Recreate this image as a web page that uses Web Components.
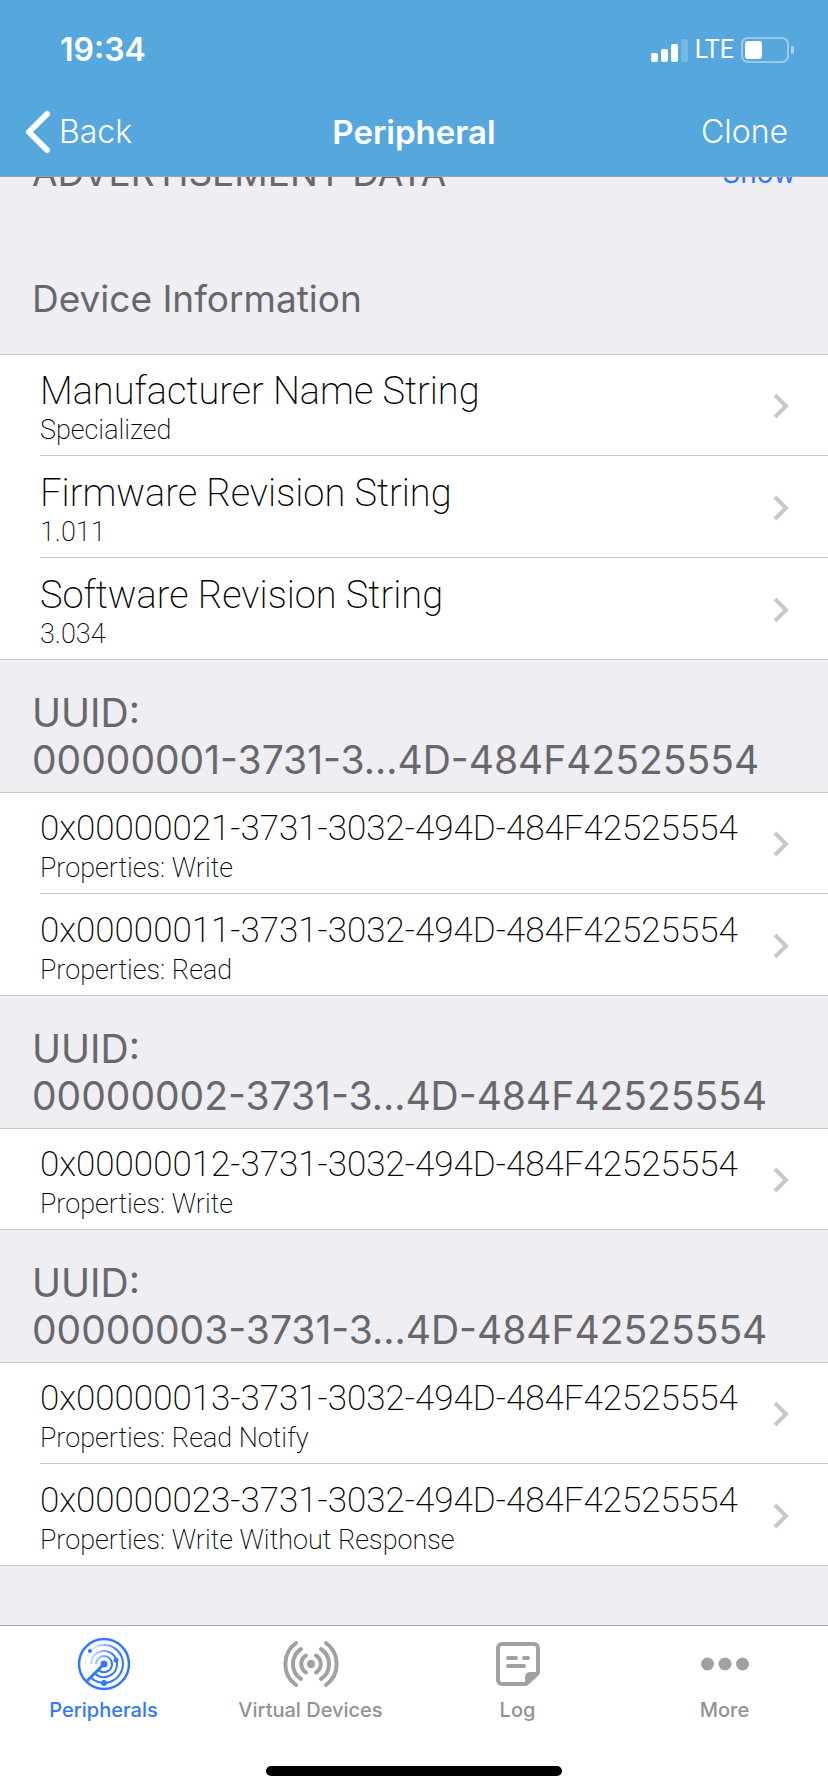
<!DOCTYPE html>
<html lang="en">
<head>
<meta charset="utf-8">
<meta name="viewport" content="width=device-width, initial-scale=1">
<title>Peripheral</title>
<style>
  html, body { margin: 0; background: #efeef3; }
  body { font-family: Inter, "Liberation Sans", sans-serif; }
</style>
</head>
<body>
<ble-app>
  <nav-bar slot="top" heading="Peripheral" back="Back" action="Clone">
    <status-bar time="19:34" network="LTE"></status-bar>
  </nav-bar>

  <advert-row>ADVERTISEMENT DATA</advert-row>

  <service-group kind="named">
    <span slot="title">Device Information</span>
    <characteristic-row kind="named">Manufacturer Name String<span slot="detail">Specialized</span></characteristic-row>
    <characteristic-row kind="named">Firmware Revision String<span slot="detail">1.011</span></characteristic-row>
    <characteristic-row kind="named">Software Revision String<span slot="detail">3.034</span></characteristic-row>
  </service-group>

  <service-group>
    <span slot="title">UUID:<br>00000001-3731-3…4D-484F42525554</span>
    <characteristic-row>0x00000021-3731-3032-494D-484F42525554<span slot="detail">Properties: Write</span></characteristic-row>
    <characteristic-row>0x00000011-3731-3032-494D-484F42525554<span slot="detail">Properties: Read</span></characteristic-row>
  </service-group>

  <service-group>
    <span slot="title">UUID:<br>00000002-3731-3…4D-484F42525554</span>
    <characteristic-row>0x00000012-3731-3032-494D-484F42525554<span slot="detail">Properties: Write</span></characteristic-row>
  </service-group>

  <service-group>
    <span slot="title">UUID:<br>00000003-3731-3…4D-484F42525554</span>
    <characteristic-row>0x00000013-3731-3032-494D-484F42525554<span slot="detail">Properties: Read Notify</span></characteristic-row>
    <characteristic-row>0x00000023-3731-3032-494D-484F42525554<span slot="detail">Properties: Write Without Response</span></characteristic-row>
  </service-group>

  <tab-bar slot="bottom">
    <tab-item active>Peripherals
      <svg slot="icon" width="56" height="56" viewBox="0 0 56 56" fill="none" stroke="currentColor" stroke-width="2" aria-hidden="true">
        <defs>
          <linearGradient id="sweep" gradientUnits="userSpaceOnUse" x1="8" y1="24" x2="32" y2="34">
            <stop offset="0" stop-color="#3478f6" stop-opacity="0.05"/>
            <stop offset="1" stop-color="#3478f6"/>
          </linearGradient>
        </defs>
        <circle cx="28" cy="28" r="25" stroke-width="2.500"/>
        <g stroke="url(#sweep)">
          <path d="M9 28A19 19 0 0 1 47 28"/>
          <path d="M15 28A13 13 0 0 1 41 28"/>
          <path d="M20 28A8 8 0 0 1 36 28"/>
        </g>
        <path d="M47 28A19 19 0 0 1 14.600 41.400M41 28A13 13 0 0 1 18.800 37.200M36 28A8 8 0 0 1 22.300 33.700"/>
        <path d="M28 28L11 45" stroke-width="3"/>
        <g fill="currentColor" stroke="none">
          <circle cx="28" cy="28" r="3.500"/><circle cx="40" cy="24" r="2.500"/><circle cx="14" cy="15" r="2"/><circle cx="28" cy="47" r="3"/>
        </g>
      </svg>
    </tab-item>
    <tab-item>Virtual Devices
      <svg slot="icon" width="56" height="56" viewBox="0 0 56 56" fill="none" stroke="currentColor" stroke-width="4" stroke-linecap="round" aria-hidden="true">
        <circle cx="28" cy="28" r="4" fill="currentColor" stroke="none"/>
        <path d="M23 19.500A10 10 0 0 0 23 36.500M33 19.500A10 10 0 0 1 33 36.500M18 13A18 18 0 0 0 18 43M38 13A18 18 0 0 1 38 43M13 7A26 26 0 0 0 13 49M43 7A26 26 0 0 1 43 49"/>
      </svg>
    </tab-item>
    <tab-item>Log
      <svg slot="icon" width="56" height="56" viewBox="0 0 56 56" fill="none" stroke="currentColor" stroke-width="4" stroke-linecap="round" stroke-linejoin="round" aria-hidden="true">
        <path d="M36 48H12a4 4 0 0 1-4-4V12a4 4 0 0 1 4-4h32a4 4 0 0 1 4 4v25z"/>
        <path d="M37 47V41a3 3 0 0 1 3-3h7z" fill="currentColor"/>
        <path d="M18 22h8M34 22h4M18 30h16"/>
      </svg>
    </tab-item>
    <tab-item>More
      <svg slot="icon" width="56" height="56" viewBox="0 0 56 56" fill="currentColor" aria-hidden="true">
        <circle cx="10.500" cy="28" r="6.500"/><circle cx="28" cy="28" r="6.500"/><circle cx="45.500" cy="28" r="6.500"/>
      </svg>
    </tab-item>
  </tab-bar>
</ble-app>

<script>
const define = (name, html, setup) => customElements.define(name, class extends HTMLElement {
  constructor() {
    super();
    this.attachShadow({ mode: 'open' }).innerHTML = html;
  }
  connectedCallback() { if (setup) setup(this, this.shadowRoot); }
});

define('ble-app', `
  <style>
    :host { display: flex; flex-direction: column; min-height: 100vh; }
    main { flex: 1; overflow: hidden; }
  </style>
  <slot name="top"></slot>
  <main><slot></slot></main>
  <slot name="bottom"></slot>`);

define('status-bar', `
  <style>
    :host { display: flex; justify-content: space-between; align-items: center; height: 100px; padding: 0 34px 0 60px; }
    time { font-size: 32px; font-weight: 600; line-height: 40px; }
    .right { display: flex; align-items: center; gap: 7px; }
    .network { font: 400 25px/40px Roboto, sans-serif; }
    svg { display: block; }
  </style>
  <time></time>
  <div class="right">
    <svg width="37" height="24" viewBox="0 0 37 24" fill="#fff" aria-hidden="true">
      <rect y="15" width="7" height="9" rx="2"/><rect x="10" y="11" width="7" height="13" rx="2"/>
      <rect x="20" y="6" width="7" height="18" rx="2"/><rect x="30" y="1" width="7" height="23" rx="2" opacity=".2"/>
    </svg>
    <span class="network"></span>
    <svg width="53" height="26" viewBox="0 0 53 26" aria-hidden="true">
      <rect x="1" y="1" width="46" height="24" rx="6" fill="none" stroke="#fff" stroke-opacity=".4" stroke-width="2"/>
      <rect x="4" y="4" width="17" height="18" rx="3" fill="#fff"/>
      <path d="M50 9a4 4 0 0 1 0 8z" fill="#fff" opacity=".5"/>
    </svg>
  </div>`, (el, root) => {
  root.querySelector('time').textContent = el.getAttribute('time');
  root.querySelector('.network').textContent = el.getAttribute('network');
});

define('nav-bar', `
  <style>
    :host { display: block; position: relative; z-index: 1; background: #55a7de; color: #fff; border-bottom: 1px solid #a0a0a5; }
    .row { display: grid; grid-template-columns: 1fr auto 1fr; align-items: center; height: 76px; padding: 0 24px 12px; box-sizing: border-box; }
    button { all: unset; display: flex; align-items: center; gap: 7px; font-size: 32px; font-weight: 350; line-height: 40px; cursor: pointer; }
    .title { margin: 0; font-size: 33px; font-weight: 600; line-height: 40px; }
    .action { justify-self: end; margin-right: 16px; }
    svg { display: block; }
  </style>
  <slot></slot>
  <div class="row">
    <button type="button" class="back">
      <svg width="28" height="44" viewBox="0 0 28 44" fill="none" stroke="#fff" stroke-width="6" stroke-linecap="round" stroke-linejoin="round" aria-hidden="true"><path d="M23 4L5 22l18 18"/></svg>
      <span></span>
    </button>
    <h1 class="title"></h1>
    <button type="button" class="action"></button>
  </div>`, (el, root) => {
  root.querySelector('.back span').textContent = el.getAttribute('back');
  root.querySelector('.title').textContent = el.getAttribute('heading');
  root.querySelector('.action').textContent = el.getAttribute('action');
});

define('advert-row', `
  <style>
    :host { display: flex; justify-content: space-between; align-items: center; margin-top: -26px; padding: 0 32px; color: #67676c; font-size: 37px; line-height: 44px; }
    button { all: unset; color: #3478f6; font-size: 28px; line-height: 44px; cursor: pointer; }
  </style>
  <span><slot></slot></span>
  <button type="button">Show</button>`);

define('service-group', `
  <style>
    :host { display: block; }
    h2 { margin: 0; padding: 29px 32px 9px; color: #67676c; font-size: 39px; font-weight: 400; line-height: 47px; }
    :host([kind="named"]) h2 { padding: 82px 32px 33px; font-size: 37px; line-height: 44px; }
    .list { background: #fff; box-shadow: inset 0 1px #c8c7cc, inset 0 -1px #c8c7cc; }
  </style>
  <h2><slot name="title"></slot></h2>
  <div class="list"><slot></slot></div>`);

define('characteristic-row', `
  <style>
    :host { display: block; padding-left: 40px; color: #000; font-family: Roboto, "Liberation Sans", sans-serif; }
    button { all: unset; display: flex; align-items: center; justify-content: space-between; width: 100%; box-sizing: border-box; padding: 13px 39px 10px 0; border-bottom: 1px solid #c8c7cc; cursor: pointer; }
    .text { display: flex; flex-direction: column; }
    .title { font-size: 35px; font-weight: 200; line-height: 48px; }
    :host([kind="named"]) .title { font-size: 38px; }
    .detail { font-size: 27px; font-weight: 200; line-height: 30px; }
    svg { display: block; flex: none; }
  </style>
  <button type="button">
    <span class="text">
      <span class="title"><slot></slot></span>
      <span class="detail"><slot name="detail"></slot></span>
    </span>
    <svg width="16" height="26" viewBox="0 0 16 26" fill="none" stroke="#c7c7cc" stroke-width="4" aria-hidden="true"><path d="M2 2l11 11L2 24"/></svg>
  </button>`);

define('tab-bar', `
  <style>
    :host { display: block; background: #fff; border-top: 1px solid #a7a7aa; }
    nav { display: grid; grid-template-columns: repeat(4, 1fr); height: 140px; }
    .home { width: 296px; height: 10px; margin: 0 auto 16px; border-radius: 5px; background: #000; }
  </style>
  <nav><slot></slot></nav>
  <div class="home"></div>`);

define('tab-item', `
  <style>
    :host { display: block; color: #929292; }
    :host([active]) { color: #3478f6; }
    ::slotted(svg) { color: #a1a1a1; }
    :host([active]) ::slotted(svg) { color: #3478f6; }
    a { display: flex; flex-direction: column; align-items: center; padding-top: 10px; color: inherit; text-decoration: none; }
    .label { margin-top: 5px; font-size: 20px; font-weight: 500; line-height: 26px; }
  </style>
  <a href="#">
    <slot name="icon"></slot>
    <span class="label"><slot></slot></span>
  </a>`);
</script>
</body>
</html>
